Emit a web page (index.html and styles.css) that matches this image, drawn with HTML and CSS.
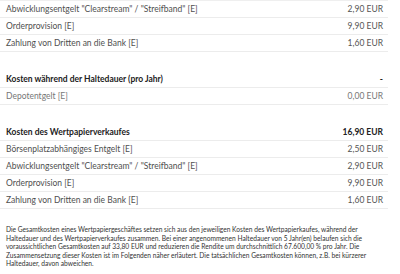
FILE: index.html
```html
<!DOCTYPE html>
<html lang="de">
<head>
<meta charset="utf-8">
<link rel="stylesheet" href="styles.css">
</head>
<body>
<div class="wrap">
  <div class="section first">
    <div class="row"><span class="label">Abwicklungsentgelt "Clearstream" / "Streifband" [E]</span><span class="amt">2,90 EUR</span></div>
    <div class="row"><span class="label">Orderprovision [E]</span><span class="amt">9,90 EUR</span></div>
    <div class="row"><span class="label">Zahlung von Dritten an die Bank [E]</span><span class="amt">1,60 EUR</span></div>
  </div>
  <div class="section">
    <div class="row head"><span class="label">Kosten während der Haltedauer (pro Jahr)</span><span class="amt">-</span></div>
    <div class="row light"><span class="label">Depotentgelt [E]</span><span class="amt">0,00 EUR</span></div>
  </div>
  <div class="section last">
    <div class="row head"><span class="label">Kosten des Wertpapierverkaufes</span><span class="amt">16,90 EUR</span></div>
    <div class="row"><span class="label">Börsenplatzabhängiges Entgelt [E]</span><span class="amt">2,50 EUR</span></div>
    <div class="row"><span class="label">Abwicklungsentgelt "Clearstream" / "Streifband" [E]</span><span class="amt">2,90 EUR</span></div>
    <div class="row"><span class="label">Orderprovision [E]</span><span class="amt">9,90 EUR</span></div>
    <div class="row"><span class="label">Zahlung von Dritten an die Bank [E]</span><span class="amt">1,60 EUR</span></div>
  </div>
  <p class="note">Die Gesamtkosten eines Wertpapiergeschäftes setzen sich aus den jeweiligen Kosten des Wertpapierkaufes, während der Haltedauer und des Wertpapierverkaufes zusammen. Bei einer angenommenen Haltedauer von 5 Jahr(en) belaufen sich die voraussichtlichen Gesamtkosten auf 33,80 EUR und reduzieren die Rendite um durchschnittlich 67.600,00 % pro Jahr. Die Zusammensetzung dieser Kosten ist im Folgenden näher erläutert. Die tatsächlichen Gesamtkosten können, z.B. bei kürzerer Haltedauer, davon abweichen.</p>
</div>
</body>
</html>
```
FILE: styles.css
```css
html, body {
  margin: 0;
  padding: 0;
  background: #ffffff;
}
body {
  font-family: Lato, "Noto Sans", sans-serif;
  color: #4a4a4a;
}
.wrap {
  width: 388px;
}
.section {
  display: flex;
  flex-direction: column;
  margin-bottom: 19px;
}
.section.first {
  border-top: 1px solid #efefef;
}
.section.last {
  margin-bottom: 16px;
}
.row {
  display: flex;
  justify-content: space-between;
  align-items: center;
  height: 16px;
  padding: 0 5px 0 6px;
  border-bottom: 1px solid #ececec;
  font-size: 8.5px;
}
.row.head {
  font-weight: 700;
  color: #222;
}
.label {
  color: #4f4f4f;
}
.row.head .label {
  color: #222;
}
.row.light .label {
  color: #777;
}
.amt {
  color: #555;
}
.row.light .amt {
  color: #777;
}
.row.head .amt {
  color: #222;
}
.note {
  margin: 0;
  padding: 0 6px;
  font-size: 6.65px;
  line-height: 8.5px;
  color: #333;
}
```
